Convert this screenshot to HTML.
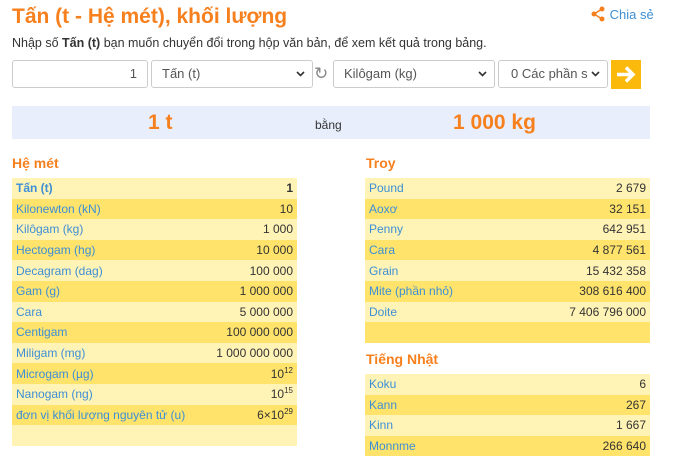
<!DOCTYPE html>
<html><head><meta charset="utf-8"><style>
*{margin:0;padding:0;box-sizing:border-box}
body{width:700px;height:450px;overflow:hidden;background:#fff;font-family:"Liberation Sans",Arial,sans-serif;position:relative}
.a{position:absolute}
h1{position:absolute;left:12px;top:5px;font-size:21px;color:#f7801e;font-weight:bold}
.share{left:590px;top:6px;color:#3d8fd6;font-size:13px}
.intro{left:12px;top:36px;font-size:12.5px;color:#333}
.box{position:absolute;top:60px;height:28px;border:1px solid #ccc;border-radius:3px;background:#fff;font-size:13px;color:#555;line-height:26px;padding:0 10px}
.box svg{position:absolute;right:7px;top:10px}
.res{left:12px;top:106px;width:638px;height:33px;background:#e8eefb}
.big{position:absolute;top:111px;font-size:21px;font-weight:bold;color:#f7801e}
h2{position:absolute;font-size:14px;color:#f7801e;font-weight:bold}
table{position:absolute;border-collapse:collapse;font-size:12px}
td{height:20.6px;padding:0 4px}
tr:nth-child(odd) td{background:#fff3b6}
tr:nth-child(even) td{background:#ffe36b}
td:first-child{color:#3d8fd6}
td:last-child{text-align:right;color:#333}
sup{font-size:8px;vertical-align:5px;line-height:0}
</style></head><body>
<h1>Tấn (t - Hệ mét), khối lượng</h1>
<div class="a share"><svg width="16" height="16" viewBox="0 0 16 16" style="vertical-align:-3px"><circle cx="12" cy="3" r="2.5" fill="#f7801e"/><circle cx="4" cy="8" r="2.5" fill="#f7801e"/><circle cx="12" cy="13" r="2.5" fill="#f7801e"/><path d="M12 3L4 8L12 13" stroke="#f7801e" stroke-width="1.5" fill="none"/></svg> Chia sẻ</div>
<div class="a intro">Nhập số <b>Tấn (t)</b> bạn muốn chuyển đổi trong hộp văn bản, để xem kết quả trong bảng.</div>
<div class="box" style="left:12px;width:136px;text-align:right">1</div>
<div class="box" style="left:151px;width:162px">Tấn (t)<svg width="9" height="6" viewBox="0 0 9 6"><path d="M1 1L4.5 4.5L8 1" stroke="#333" stroke-width="1.6" fill="none"/></svg></div>
<div class="a" style="left:314px;top:64px;font-size:17px;color:#888">&#8635;</div>
<div class="box" style="left:333px;width:162px">Kilôgam (kg)<svg width="9" height="6" viewBox="0 0 9 6"><path d="M1 1L4.5 4.5L8 1" stroke="#333" stroke-width="1.6" fill="none"/></svg></div>
<div class="box" style="left:498px;width:110px;padding-left:12px">0 Các phần s<svg width="9" height="6" viewBox="0 0 9 6"><path d="M1 1L4.5 4.5L8 1" stroke="#333" stroke-width="1.6" fill="none"/></svg></div>
<div class="a" style="left:611px;top:60px;width:30px;height:29px;background:#fbb90c"><svg width="30" height="29" viewBox="0 0 30 29"><path d="M6 14.5H22M15 7.5L22 14.5L15 21.5" stroke="#fff" stroke-width="3.5" fill="none"/></svg></div>
<div class="a res"></div>
<div class="big" style="left:148px">1 t</div>
<div class="a" style="left:315px;top:118px;font-size:12px;color:#333">bằng</div>
<div class="big" style="left:453px">1 000 kg</div>
<h2 style="left:12px;top:155px">Hệ mét</h2>
<table style="left:12px;top:178px;width:285px">
<tr><td><b>Tấn (t)</b></td><td><b>1</b></td></tr>
<tr><td>Kilonewton (kN)</td><td>10</td></tr>
<tr><td>Kilôgam (kg)</td><td>1 000</td></tr>
<tr><td>Hectogam (hg)</td><td>10 000</td></tr>
<tr><td>Decagram (dag)</td><td>100 000</td></tr>
<tr><td>Gam (g)</td><td>1 000 000</td></tr>
<tr><td>Cara</td><td>5 000 000</td></tr>
<tr><td>Centigam</td><td>100 000 000</td></tr>
<tr><td>Miligam (mg)</td><td>1 000 000 000</td></tr>
<tr><td>Microgam (µg)</td><td>10<sup>12</sup></td></tr>
<tr><td>Nanogam (ng)</td><td>10<sup>15</sup></td></tr>
<tr><td>đơn vị khối lượng nguyên tử (u)</td><td>6×10<sup>29</sup></td></tr>
<tr><td></td><td></td></tr>
</table>
<h2 style="left:366px;top:155px">Troy</h2>
<table style="left:365px;top:178px;width:285px">
<tr><td>Pound</td><td>2 679</td></tr>
<tr><td>Aoxơ</td><td>32 151</td></tr>
<tr><td>Penny</td><td>642 951</td></tr>
<tr><td>Cara</td><td>4 877 561</td></tr>
<tr><td>Grain</td><td>15 432 358</td></tr>
<tr><td>Mite (phần nhỏ)</td><td>308 616 400</td></tr>
<tr><td>Doite</td><td>7 406 796 000</td></tr>
<tr><td></td><td></td></tr>
</table>
<h2 style="left:366px;top:351px">Tiếng Nhật</h2>
<table style="left:365px;top:374px;width:285px">
<tr><td>Koku</td><td>6</td></tr>
<tr><td>Kann</td><td>267</td></tr>
<tr><td>Kinn</td><td>1 667</td></tr>
<tr><td>Monnme</td><td>266 640</td></tr>
</table>
</body></html>
